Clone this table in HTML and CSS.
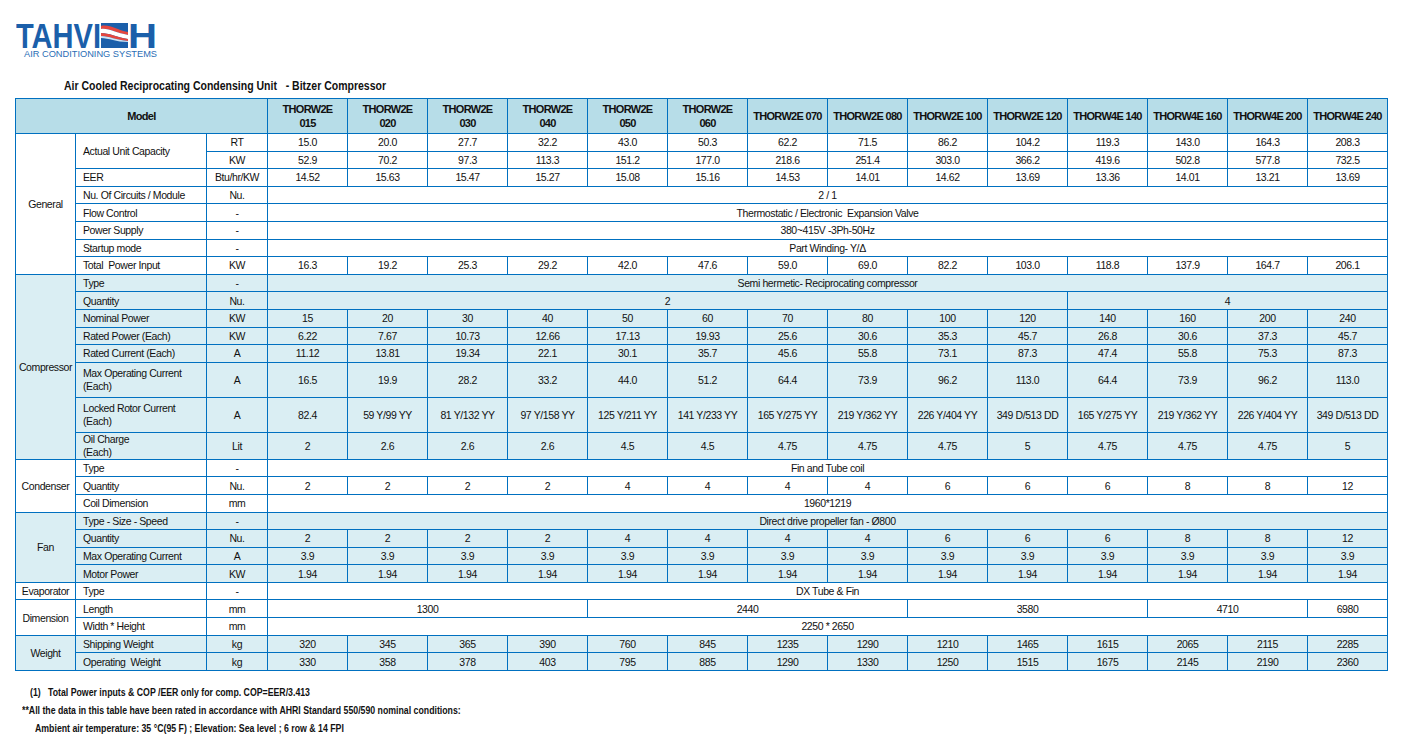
FILE: index.html
```html
<!DOCTYPE html>
<html>
<head>
<meta charset="utf-8">
<link rel="stylesheet" href="styles.css">
</head>
<body>
<div class="page">
  <svg class="logo" width="146" height="48" viewBox="0 0 146 48">
    <text x="0" y="33" class="logo-main" textLength="85" lengthAdjust="spacingAndGlyphs">TAHVI</text>
    <g transform="translate(85,8)">
      <rect x="0" y="0" width="27" height="25" fill="#1b5faa"/>
      <path d="M0 3 C9 1 15 7 27 9 L27 12 C15 10 8 5 0 6 Z" fill="#e5473f"/>
      <path d="M0 6 C8 5 15 10 27 12 L27 16 C15 14 8 10 0 10 Z" fill="#ffffff"/>
      <path d="M0 10 C8 10 15 14 27 16 L27 18 C15 17 8 13 0 13 Z" fill="#e5473f"/>
      <path d="M0 13 C8 13 15 17 27 18 L27 19 C15 19 8 15 0 15 Z" fill="#cfe3f3"/>
    </g>
    <text x="112" y="33" class="logo-main" textLength="29" lengthAdjust="spacingAndGlyphs">H</text>
    <text x="8" y="42" class="logo-sub" textLength="133" lengthAdjust="spacingAndGlyphs">AIR CONDITIONING SYSTEMS</text>
  </svg>
  <div class="title"><span class="narrow">Air Cooled Reciprocating Condensing Unit &nbsp;&nbsp;- Bitzer Compressor</span></div>
  <table class="spec">
    <colgroup>
      <col class="c-grp"><col class="c-par"><col class="c-unit">
      <col class="c-m"><col class="c-m"><col class="c-m"><col class="c-m"><col class="c-m"><col class="c-m"><col class="c-m">
      <col class="c-m"><col class="c-m"><col class="c-m"><col class="c-m"><col class="c-m"><col class="c-m"><col class="c-m">
    </colgroup>
    <tr class="head">
      <td colspan="3">Model</td>
      <td>THORW2E<br>015</td><td>THORW2E<br>020</td><td>THORW2E<br>030</td><td>THORW2E<br>040</td><td>THORW2E<br>050</td><td>THORW2E<br>060</td>
      <td>THORW2E 070</td><td>THORW2E 080</td><td>THORW2E 100</td><td>THORW2E 120</td><td>THORW4E 140</td><td>THORW4E 160</td><td>THORW4E 200</td><td>THORW4E 240</td>
    </tr>
    <!-- General -->
    <tr class="r">
      <td rowspan="8">General</td>
      <td rowspan="2" class="p">Actual Unit Capacity</td><td>RT</td>
      <td>15.0</td><td>20.0</td><td>27.7</td><td>32.2</td><td>43.0</td><td>50.3</td><td>62.2</td><td>71.5</td><td>86.2</td><td>104.2</td><td>119.3</td><td>143.0</td><td>164.3</td><td>208.3</td>
    </tr>
    <tr class="r">
      <td>KW</td>
      <td>52.9</td><td>70.2</td><td>97.3</td><td>113.3</td><td>151.2</td><td>177.0</td><td>218.6</td><td>251.4</td><td>303.0</td><td>366.2</td><td>419.6</td><td>502.8</td><td>577.8</td><td>732.5</td>
    </tr>
    <tr class="r">
      <td class="p">EER</td><td>Btu/hr/KW</td>
      <td>14.52</td><td>15.63</td><td>15.47</td><td>15.27</td><td>15.08</td><td>15.16</td><td>14.53</td><td>14.01</td><td>14.62</td><td>13.69</td><td>13.36</td><td>14.01</td><td>13.21</td><td>13.69</td>
    </tr>
    <tr class="r"><td class="p">Nu. Of Circuits / Module</td><td>Nu.</td><td colspan="14">2 / 1</td></tr>
    <tr class="r"><td class="p">Flow Control</td><td>-</td><td colspan="14">Thermostatic / Electronic &nbsp;Expansion Valve</td></tr>
    <tr class="r"><td class="p">Power Supply</td><td>-</td><td colspan="14">380~415V -3Ph-50Hz</td></tr>
    <tr class="r"><td class="p">Startup mode</td><td>-</td><td colspan="14">Part Winding- Y/Δ</td></tr>
    <tr class="r">
      <td class="p">Total &nbsp;Power Input</td><td>KW</td>
      <td>16.3</td><td>19.2</td><td>25.3</td><td>29.2</td><td>42.0</td><td>47.6</td><td>59.0</td><td>69.0</td><td>82.2</td><td>103.0</td><td>118.8</td><td>137.9</td><td>164.7</td><td>206.1</td>
    </tr>
    <!-- Compressor -->
    <tr class="r aq">
      <td rowspan="8">Compressor</td>
      <td class="p">Type</td><td>-</td><td colspan="14">Semi hermetic- Reciprocating compressor</td>
    </tr>
    <tr class="r aq"><td class="p">Quantity</td><td>Nu.</td><td colspan="10">2</td><td colspan="4">4</td></tr>
    <tr class="r aq">
      <td class="p">Nominal Power</td><td>KW</td>
      <td>15</td><td>20</td><td>30</td><td>40</td><td>50</td><td>60</td><td>70</td><td>80</td><td>100</td><td>120</td><td>140</td><td>160</td><td>200</td><td>240</td>
    </tr>
    <tr class="r aq">
      <td class="p">Rated Power (Each)</td><td>KW</td>
      <td>6.22</td><td>7.67</td><td>10.73</td><td>12.66</td><td>17.13</td><td>19.93</td><td>25.6</td><td>30.6</td><td>35.3</td><td>45.7</td><td>26.8</td><td>30.6</td><td>37.3</td><td>45.7</td>
    </tr>
    <tr class="r aq">
      <td class="p">Rated Current (Each)</td><td>A</td>
      <td>11.12</td><td>13.81</td><td>19.34</td><td>22.1</td><td>30.1</td><td>35.7</td><td>45.6</td><td>55.8</td><td>73.1</td><td>87.3</td><td>47.4</td><td>55.8</td><td>75.3</td><td>87.3</td>
    </tr>
    <tr class="tall aq">
      <td class="p two">Max Operating Current<br>(Each)</td><td>A</td>
      <td>16.5</td><td>19.9</td><td>28.2</td><td>33.2</td><td>44.0</td><td>51.2</td><td>64.4</td><td>73.9</td><td>96.2</td><td>113.0</td><td>64.4</td><td>73.9</td><td>96.2</td><td>113.0</td>
    </tr>
    <tr class="tall aq">
      <td class="p two">Locked Rotor Current<br>(Each)</td><td>A</td>
      <td>82.4</td><td>59 Y/99 YY</td><td>81 Y/132 YY</td><td>97 Y/158 YY</td><td>125 Y/211 YY</td><td>141 Y/233 YY</td><td>165 Y/275 YY</td><td>219 Y/362 YY</td><td>226 Y/404 YY</td><td>349 D/513 DD</td><td>165 Y/275 YY</td><td>219 Y/362 YY</td><td>226 Y/404 YY</td><td>349 D/513 DD</td>
    </tr>
    <tr class="mid aq">
      <td class="p two">Oil Charge<br>(Each)</td><td>Lit</td>
      <td>2</td><td>2.6</td><td>2.6</td><td>2.6</td><td>4.5</td><td>4.5</td><td>4.75</td><td>4.75</td><td>4.75</td><td>5</td><td>4.75</td><td>4.75</td><td>4.75</td><td>5</td>
    </tr>
    <!-- Condenser -->
    <tr class="r">
      <td rowspan="3">Condenser</td>
      <td class="p">Type</td><td>-</td><td colspan="14">Fin and Tube coil</td>
    </tr>
    <tr class="r">
      <td class="p">Quantity</td><td>Nu.</td>
      <td>2</td><td>2</td><td>2</td><td>2</td><td>4</td><td>4</td><td>4</td><td>4</td><td>6</td><td>6</td><td>6</td><td>8</td><td>8</td><td>12</td>
    </tr>
    <tr class="r"><td class="p">Coil Dimension</td><td>mm</td><td colspan="14">1960*1219</td></tr>
    <!-- Fan -->
    <tr class="r aq">
      <td rowspan="4">Fan</td>
      <td class="p">Type - Size - Speed</td><td>-</td><td colspan="14">Direct drive propeller fan - Ø800</td>
    </tr>
    <tr class="r aq">
      <td class="p">Quantity</td><td>Nu.</td>
      <td>2</td><td>2</td><td>2</td><td>2</td><td>4</td><td>4</td><td>4</td><td>4</td><td>6</td><td>6</td><td>6</td><td>8</td><td>8</td><td>12</td>
    </tr>
    <tr class="r aq">
      <td class="p">Max Operating Current</td><td>A</td>
      <td>3.9</td><td>3.9</td><td>3.9</td><td>3.9</td><td>3.9</td><td>3.9</td><td>3.9</td><td>3.9</td><td>3.9</td><td>3.9</td><td>3.9</td><td>3.9</td><td>3.9</td><td>3.9</td>
    </tr>
    <tr class="r aq">
      <td class="p">Motor Power</td><td>KW</td>
      <td>1.94</td><td>1.94</td><td>1.94</td><td>1.94</td><td>1.94</td><td>1.94</td><td>1.94</td><td>1.94</td><td>1.94</td><td>1.94</td><td>1.94</td><td>1.94</td><td>1.94</td><td>1.94</td>
    </tr>
    <!-- Evaporator -->
    <tr class="r"><td>Evaporator</td><td class="p">Type</td><td>-</td><td colspan="14">DX Tube &amp; Fin</td></tr>
    <!-- Dimension -->
    <tr class="r">
      <td rowspan="2">Dimension</td>
      <td class="p">Length</td><td>mm</td>
      <td colspan="4">1300</td><td colspan="4">2440</td><td colspan="3">3580</td><td colspan="2">4710</td><td>6980</td>
    </tr>
    <tr class="r"><td class="p">Width * Height</td><td>mm</td><td colspan="14">2250 * 2650</td></tr>
    <!-- Weight -->
    <tr class="r aq">
      <td rowspan="2">Weight</td>
      <td class="p">Shipping Weight</td><td>kg</td>
      <td>320</td><td>345</td><td>365</td><td>390</td><td>760</td><td>845</td><td>1235</td><td>1290</td><td>1210</td><td>1465</td><td>1615</td><td>2065</td><td>2115</td><td>2285</td>
    </tr>
    <tr class="r aq">
      <td class="p">Operating &nbsp;Weight</td><td>kg</td>
      <td>330</td><td>358</td><td>378</td><td>403</td><td>795</td><td>885</td><td>1290</td><td>1330</td><td>1250</td><td>1515</td><td>1675</td><td>2145</td><td>2190</td><td>2360</td>
    </tr>
  </table>
  <div class="notes">
    <div class="n1"><span class="narrow">(1) &nbsp;&nbsp;Total Power inputs &amp; COP /EER only for comp. COP=EER/3.413</span></div>
    <div class="n2"><span class="narrow">**All the data in this table have been rated in accordance with AHRI Standard 550/590 nominal conditions:</span></div>
    <div class="n3"><span class="narrow">Ambient air temperature: 35 °C(95 F) ; Elevation: Sea level ; 6 row &amp; 14 FPI</span></div>
  </div>
</div>
</body>
</html>
```

FILE: styles.css
```css
html, body {
  margin: 0;
  padding: 0;
  background: #ffffff;
}

.page {
  padding: 15px 0 0 15px;
  font-family: "Liberation Sans", Arial, sans-serif;
  color: #111111;
}

.logo {
  display: block;
  margin-left: 1px;
  margin-bottom: -9px;
}

.logo-main {
  font-family: "Liberation Sans", Arial, sans-serif;
  font-weight: bold;
  font-size: 35px;
  fill: #1b5faa;
}

.logo-sub {
  font-family: "Liberation Sans", sans-serif;
  font-size: 9.5px;
  fill: #2a6db5;
}

.narrow {
  display: inline-block;
  transform: scaleX(0.875);
  transform-origin: left center;
  white-space: nowrap;
}

.title {
  margin: 25px 0 5px 49px;
  font-weight: bold;
  font-size: 12px;
  line-height: 14px;
}

.spec {
  border-collapse: collapse;
  table-layout: fixed;
  width: 1373px;
}

.c-grp { width: 60px; }
.c-par { width: 131px; }
.c-unit { width: 61px; }
.c-m { width: 80px; }

.spec td {
  border: 1px solid #0070c0;
  padding: 0 1px;
  font-size: 10.5px;
  letter-spacing: -0.4px;
  line-height: 12px;
  text-align: center;
  vertical-align: middle;
  white-space: nowrap;
  overflow: hidden;
}

.spec td.p {
  text-align: left;
  padding-left: 7px;
}

.spec td.two {
  line-height: 13px;
}

.head td {
  background: #b7dde8;
  font-weight: bold;
  font-size: 11px;
  letter-spacing: -0.7px;
  line-height: 14px;
}

.head { height: 35px; }
.r { height: 17.6px; }
.tall { height: 35px; }
.mid { height: 27px; }

.aq td {
  background: #daeef3;
}

.notes {
  margin-top: 13px;
  font-weight: bold;
  font-size: 10px;
  line-height: 18px;
}

.n1 { margin-left: 15px; }
.n2 { margin-left: 7px; }
.n3 { margin-left: 20px; }
```
